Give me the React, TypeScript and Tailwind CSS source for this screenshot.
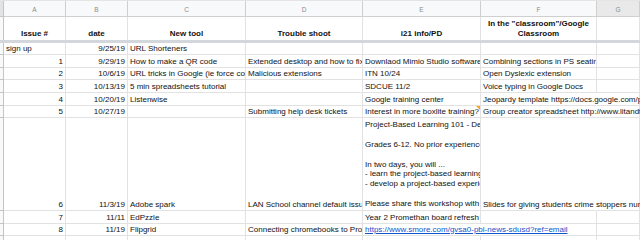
import React from 'react'

type Cell = {
  t?: string
  r?: boolean
  over?: boolean
  link?: boolean
  note?: boolean
  pre?: boolean
}

const WIDTHS = ['w-[62px]', 'w-[62px]', 'w-[118px]', 'w-[117px]', 'w-[118px]', 'w-[116px]', 'flex-1']
const LETTERS = ['A', 'B', 'C', 'D', 'E', 'F', 'G']

const PBL = `Project-Based Learning 101 - Deeper Learning Workshop

Grades 6-12. No prior experience with PBL needed.

In two days, you will ...
- learn the project-based learning framework
- develop a project-based experience for your class

Please share this workshop with your staff`

const ROWS: { h: string; c: Cell[] }[] = [
  { h: 'h-[12px]', c: [{ t: 'sign up' }, { t: '9/25/19', r: true }, { t: 'URL Shorteners' }, {}, {}, {}, {}] },
  {
    h: 'h-[13px]',
    c: [
      { t: '1', r: true },
      { t: '9/29/19', r: true },
      { t: 'How to make a QR code' },
      { t: 'Extended desktop and how to fix it' },
      { t: 'Downlaod Mimio Studio software' },
      { t: 'Combining sections in PS seating charts' },
      {},
    ],
  },
  {
    h: 'h-[12px]',
    c: [
      { t: '2', r: true },
      { t: '10/6/19', r: true },
      { t: 'URL tricks in Google (ie force copy)' },
      { t: 'Malicious extensions' },
      { t: 'ITN 10/24' },
      { t: 'Open Dyslexic extension' },
      {},
    ],
  },
  {
    h: 'h-[13px]',
    c: [
      { t: '3', r: true },
      { t: '10/13/19', r: true },
      { t: '5 min spreadsheets tutorial' },
      {},
      { t: 'SDCUE 11/2' },
      { t: 'Voice typing in Google Docs' },
      {},
    ],
  },
  {
    h: 'h-[13px]',
    c: [
      { t: '4', r: true },
      { t: '10/20/19', r: true },
      { t: 'Listenwise' },
      {},
      { t: 'Google training center' },
      { t: 'Jeopardy template https://docs.google.com/presentation/d/1', over: true },
      {},
    ],
  },
  {
    h: 'h-[12px]',
    c: [
      { t: '5', r: true },
      { t: '10/27/19', r: true },
      {},
      { t: 'Submitting help desk tickets' },
      { t: 'Interest in more boxlite training?', note: true },
      { t: 'Group creator spreadsheet  http://www.litandtech.com/2014/03', over: true },
      {},
    ],
  },
  {
    h: 'h-[93px]',
    c: [
      { t: '6', r: true },
      { t: '11/3/19', r: true },
      { t: 'Adobe spark' },
      { t: 'LAN School channel default issue' },
      { t: PBL, pre: true },
      { t: 'Slides for giving students crime stoppers numbers', over: true },
      {},
    ],
  },
  {
    h: 'h-[13px]',
    c: [
      { t: '7', r: true },
      { t: '11/11', r: true },
      { t: 'EdPzzle' },
      {},
      { t: 'Year 2 Promethan board refresh' },
      {},
      {},
    ],
  },
  {
    h: 'h-[12px]',
    c: [
      { t: '8', r: true },
      { t: '11/19', r: true },
      { t: 'Flipgrid' },
      { t: 'Connecting chromebooks to Promethean boards' },
      { t: 'https://www.smore.com/gvsa0-pbl-news-sdusd?ref=email', link: true, over: true },
      {},
      {},
    ],
  },
  { h: 'h-[13px]', c: [{}, {}, {}, {}, {}, {}, {}] },
]

function DataCell({ cell, w }: { cell: Cell; w: string }) {
  return (
    <div
      className={`relative shrink-0 ${w} flex items-end px-[2px] pb-[1.5px] border-b border-[#e2e2e2] ${
        cell.over ? 'overflow-visible border-r border-r-transparent z-10' : 'overflow-hidden border-r border-r-[#e2e2e2]'
      } ${cell.r ? 'justify-end' : 'justify-start'}`}
    >
      {cell.t && (
        <span
          className={`${cell.pre ? 'whitespace-pre leading-[9.8px]' : 'whitespace-nowrap leading-[9px]'} ${
            cell.link ? 'text-[#1155cc] underline' : ''
          }`}
        >
          {cell.t}
        </span>
      )}
      {cell.note && (
        <div className="absolute top-0 right-0 w-0 h-0 border-l-[4px] border-l-transparent border-t-[4px] border-t-[#f4a523]" />
      )}
    </div>
  )
}

export default function App() {
  return (
    <div className="w-[640px] h-[240px] overflow-hidden bg-white font-['Liberation_Sans',Arial,sans-serif] text-[8px] text-[#111]">
      {/* column letters */}
      <div className="flex h-[17px] border-t border-[#e4e4e4]">
        <div className="w-[4px] shrink-0 bg-[#e3e3e3] border-r border-b border-[#c4c4c4]" />
        {LETTERS.map((l, i) => (
          <div
            key={l}
            className={`${WIDTHS[i]} shrink-0 flex items-center justify-center pt-[2px] text-[6.5px] text-[#8a8a8a] border-r border-b border-[#cfcfcf] ${
              l === 'G' ? 'bg-[#e9e9e9]' : 'bg-[#f8f9fa]'
            }`}
          >
            {l}
          </div>
        ))}
      </div>

      {/* header row */}
      <div className="flex h-[23px] font-bold">
        <div className="w-[4px] shrink-0 bg-[#f8f9fa] border-r border-[#c4c4c4]" />
        {['Issue #', 'date', 'New tool', 'Trouble shoot', 'i21 info/PD', 'In the "classroom"/Google\nClassroom', ''].map(
          (t, i) => (
            <div
              key={i}
              className={`${WIDTHS[i]} shrink-0 flex items-end justify-center pb-[2px] border-r border-[#e2e2e2] overflow-hidden`}
            >
              <span className="whitespace-pre text-center leading-[9.3px]">{t}</span>
            </div>
          )
        )}
      </div>

      {/* frozen divider */}
      <div className="h-[3px] bg-[#d3d6db]" />

      {ROWS.map((row, ri) => (
        <div key={ri} className={`flex ${row.h}`}>
          <div className="w-[4px] shrink-0 bg-[#f8f9fa] border-r border-b border-[#c4c4c4]" />
          {row.c.map((cell, ci) => (
            <DataCell key={ci} cell={cell} w={WIDTHS[ci]} />
          ))}
        </div>
      ))}
    </div>
  )
}
